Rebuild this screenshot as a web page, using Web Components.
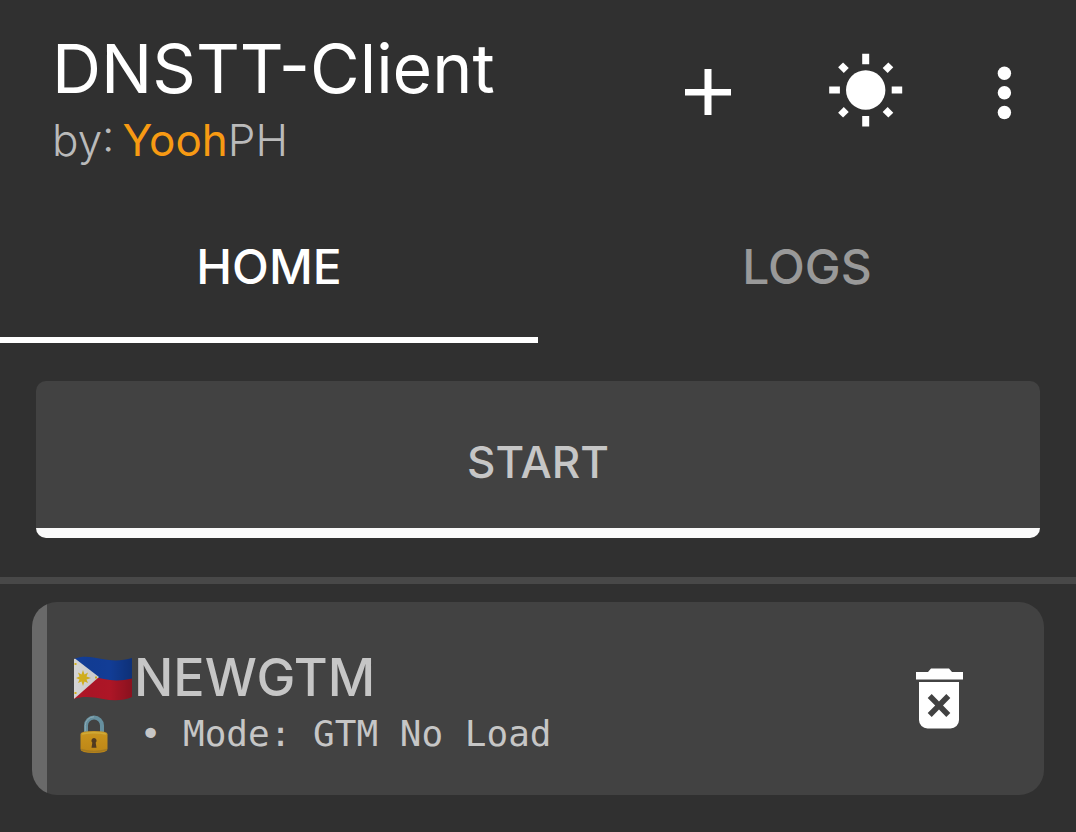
<!DOCTYPE html>
<html lang="en">
<head>
<meta charset="utf-8">
<meta name="viewport" content="width=device-width, initial-scale=1">
<title>DNSTT-Client</title>
<style>
  body { margin: 0; background: #303030; color: #c6c6c6; font-family: Inter, Roboto, "Liberation Sans", sans-serif; }
</style>
</head>
<body>
<client-app></client-app>
<script>
const define = (name, html, setup) => customElements.define(name, class extends HTMLElement {
  constructor() {
    super();
    this.attachShadow({ mode: "open" }).innerHTML = html;
  }
  connectedCallback() { if (setup) setup(this, this.shadowRoot); }
});

define("app-header", `
  <style>
    :host { display: flex; justify-content: space-between; align-items: flex-start; height: 196px; box-sizing: border-box; padding: 28px 52px 0; }
    h1, p { margin: 0; white-space: nowrap; font-feature-settings: "case"; }
    h1 { font-size: 68px; line-height: 80px; font-weight: 400; color: #fff; }
    p { font-size: 44px; line-height: 64px; font-weight: 300; color: #bababa; }
    nav { display: flex; gap: 78px; padding-top: 24px; }
  </style>
  <div><h1><slot name="title"></slot></h1><p><slot name="byline"></slot></p></div>
  <nav aria-label="Actions"><slot></slot></nav>`);

define("icon-button", `
  <style>
    :host { display: block; }
    button { display: block; margin: 0; padding: 0; border: 0; background: none; color: #fff; cursor: pointer; }
    ::slotted(svg) { display: block; fill: currentColor; }
  </style>
  <button type="button"><slot></slot></button>`,
  (el, root) => root.querySelector("button").setAttribute("aria-label", el.getAttribute("label")));

define("tab-bar", `
  <style>:host { display: flex; height: 147px; }</style>
  <slot></slot>`, el => el.setAttribute("role", "tablist"));

define("tab-item", `
  <style>
    :host { display: block; flex: 1; }
    button { display: block; width: 100%; height: 100%; margin: 0; padding: 1px 0 0; border: 0; border-bottom: 6px solid transparent; background: none;
      font: 500 48px/56px Inter, Roboto, sans-serif; color: #999; cursor: pointer; }
    :host([selected]) button { color: #fff; border-bottom-color: #fff; }
  </style>
  <button type="button" role="tab"><slot></slot></button>`,
  (el, root) => root.querySelector("button").setAttribute("aria-selected", el.hasAttribute("selected")));

define("start-button", `
  <style>
    :host { display: block; margin: 38px 36px 39px; }
    button { display: block; width: 100%; height: 157px; margin: 0; padding: 4px 0 0; border: 0; border-radius: 10px; overflow: hidden;
      background: linear-gradient(#fafafa, #fafafa) bottom / 100% 10px no-repeat #424242;
      font: 500 44px/56px Inter, Roboto, sans-serif; color: #c6c6c6; cursor: pointer; }
  </style>
  <button type="button"><slot></slot></button>`);

define("server-card", `
  <style>
    :host { display: flex; align-items: center; justify-content: space-between; height: 193px; box-sizing: border-box; margin: 18px 32px 37px;
      padding: 0 65px 0 41px; border-radius: 25px; background: linear-gradient(#696969, #696969) left / 15px 100% no-repeat #424242; }
    h2, p { display: flex; align-items: center; margin: 0; white-space: nowrap; }
    h2 { font-size: 52px; line-height: 64px; font-weight: 500; }
    p { font: 36px/48px "DejaVu Sans Mono", monospace; white-space: pre; }
    .text { padding-top: 6px; }
    ::slotted(svg) { display: block; }
  </style>
  <div class="text">
    <h2><slot name="flag"></slot><slot name="name"></slot></h2>
    <p><slot name="lock"></slot><slot name="mode"></slot></p>
  </div>
  <slot name="action"></slot>`);

define("client-app", `
  <style>
    :host { display: block; }
    .byline { display: inline-flex; gap: 8px; }
    .accent { color: #f79a13; font-weight: 400; }
    hr { height: 7px; margin: 0; border: 0; background: #484848; }
  </style>
  <app-header>
    <span slot="title">DNSTT-Client</span>
    <span slot="byline" class="byline"><span>by:</span> <span><span class="accent">Yooh</span>PH</span></span>
    <icon-button label="Add">
      <svg width="80" height="80" viewBox="0 0 80 80"><path d="M36.500 17h7v20H63v6.500H43.500V63h-7V43.500H17V37h19.500z"/></svg>
    </icon-button>
    <icon-button label="Theme">
      <svg width="80" height="80" viewBox="0 0 80 80"><g transform="translate(39.700 38)">
        <circle r="19.700"/>
        <path d="M-3.500-36.300h7v10.500h-7zM-3.500 26h7v10.500h-7zM-36.500-3.500h10.700v7h-10.700zM26-3.500h10.500v7H26z"/>
        <path d="M-3.500-35.500h7v8h-7z" transform="rotate(45)"/><path d="M-3.500-35.500h7v8h-7z" transform="rotate(135)"/><path d="M-3.500-35.500h7v8h-7z" transform="rotate(225)"/><path d="M-3.500-35.500h7v8h-7z" transform="rotate(315)"/>
      </g></svg>
    </icon-button>
    <icon-button label="More options">
      <svg width="40" height="80" viewBox="0 0 40 80"><circle cx="20.400" cy="21.200" r="6.700"/><circle cx="20.400" cy="40.800" r="6.700"/><circle cx="20.400" cy="60.500" r="6.700"/></svg>
    </icon-button>
  </app-header>
  <main>
    <tab-bar><tab-item selected>HOME</tab-item><tab-item>LOGS</tab-item></tab-bar>
    <start-button>START</start-button>
    <hr>
    <server-card>
      <svg slot="flag" width="61" height="48" viewBox="0 0 61 48" role="img" aria-label="Philippines">
        <defs>
          <clipPath id="wave"><path d="M1 5C10 1 19 3 29 5S50 7 59 4V43C50 47 40 47 30 45S10 42 1 45Z"/></clipPath>
          <linearGradient id="shade"><stop offset="0" stop-opacity="0"/><stop offset=".3" stop-opacity=".04"/><stop offset=".6" stop-opacity=".02"/><stop offset="1" stop-opacity=".24"/></linearGradient>
        </defs>
        <g clip-path="url(#wave)">
          <path fill="#123e99" d="M0 0h61v30H0z"/>
          <path fill="#b11627" d="M0 23C12 20 22 23 31 25S50 27 61 24V48H0Z"/>
          <path fill="#d5d5d5" d="M0 3 26 23 0 46Z"/>
          <path fill="#d4b11f" d="M10 16l1.500 4.500 3.500-2-1.500 4 4.500 1.500-4.500 1.500 1.500 3.500-3.500-1.500L10 32l-1.500-4.500L5 29l1.500-3.500L3 24l3.500-1.500L5 18.500l3.500 2z"/>
          <path fill="#d4b11f" d="M1.500 9h2v2h-2zM1.500 38h2v2h-2zM22 22.500h2v2h-2z"/>
          <path fill="url(#shade)" d="M0 0h61v48H0z"/>
        </g>
      </svg>
      <span slot="name">NEWGTM</span>
      <svg slot="lock" width="45" height="42" viewBox="0 0 45 42" role="img" aria-label="Locked">
        <defs><linearGradient id="brass" x2="0" y2="1"><stop offset="0" stop-color="#c59627"/><stop offset=".25" stop-color="#c7911b"/><stop offset="1" stop-color="#bd8617"/></linearGradient></defs>
        <path d="M13 22V12.500a8 8 0 0 1 16 0V22" fill="none" stroke="#668f9e" stroke-width="4"/>
        <path d="M12.300 18v-5.500a8.700 8.700 0 0 1 8.700-8.700" fill="none" stroke="#8eabb5" stroke-width="1"/>
        <path d="M7.500 21q0-3 13.500-3t13.500 3v15q0 4-13.500 4T7.500 36z" fill="url(#brass)"/>
        <path d="M9 21q12-2.500 24 0" fill="none" stroke="#d0aa36" stroke-width="1.500"/>
        <path d="M8 36.500q13 4 26 0" fill="none" stroke="#a47a21" stroke-width="1.500"/>
        <path d="M21 25a2.700 2.700 0 0 1 1.700 4.700l.8 5h-5l.8-5A2.700 2.700 0 0 1 21 25z" fill="#513a20"/>
      </svg>
      <span slot="mode"> • Mode: GTM No Load</span>
      <icon-button slot="action" label="Delete">
        <svg width="80" height="80" viewBox="0 0 80 80"><path d="M17 13h12l3-3.500h18l3 3.500h11v7.500H17z"/><path fill-rule="evenodd" d="M20 23h40v38a8.500 8.500 0 0 1-8.500 8.500h-23A8.500 8.500 0 0 1 20 61zM32.700 35l-4 4 7.500 7.500-7.500 7.500 4 4 7.300-7.500 7.300 7.500 4-4-7.300-7.500 7.300-7.500-4-4-7.300 7.500z"/></svg>
      </icon-button>
    </server-card>
  </main>`);
</script>
</body>
</html>
